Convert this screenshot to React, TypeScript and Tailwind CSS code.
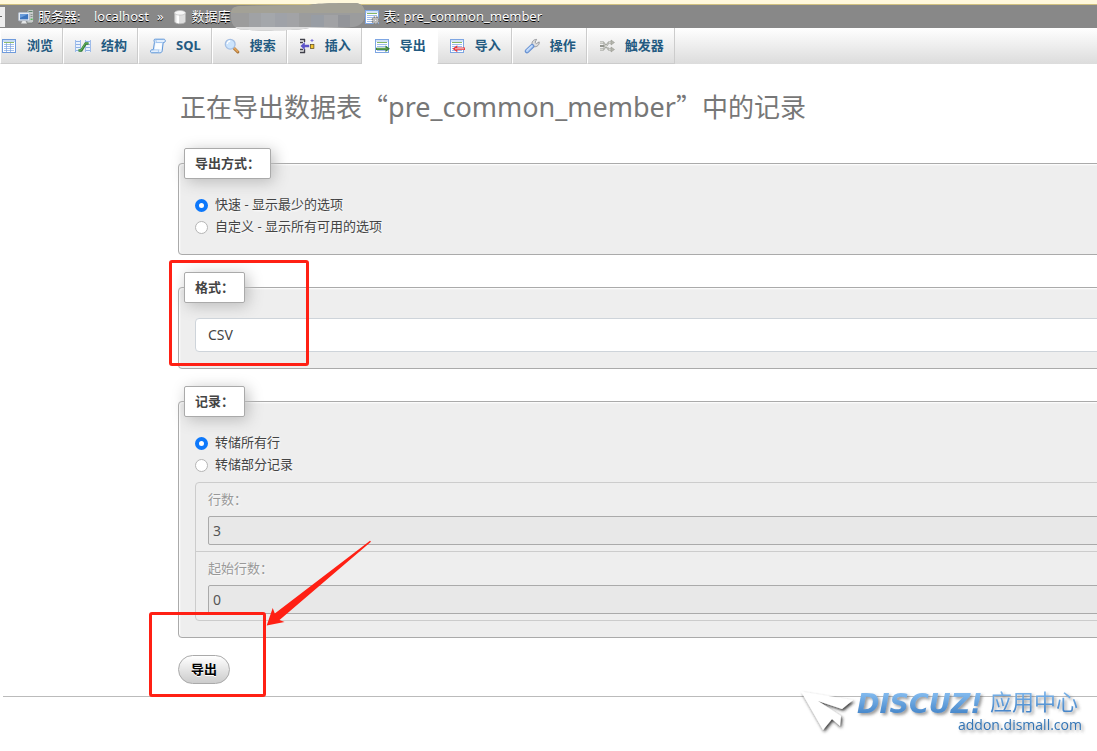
import type { ReactNode } from 'react'

const uiFont = "font-['Noto_Sans','Noto_Sans_CJK_SC',sans-serif]"

function Icon({ children }: { children: ReactNode }) {
  return (
    <svg viewBox="0 0 16 16" className="w-4 h-4 shrink-0" aria-hidden="true">
      {children}
    </svg>
  )
}

function Sheet() {
  return (
    <>
      <rect x="1.5" y="1.5" width="13" height="13" fill="#fff" stroke="#7ea6e3" />
      <rect x="2" y="2" width="12" height="2" fill="#d3e2f8" />
      <path d="M3 4.5h10" stroke="#84b766" />
      <path d="M3 6.5h10M3 8.5h10M3 10.5h10M3 12.5h10" stroke="#9dbcec" />
    </>
  )
}

function BrowseIcon() {
  return (
    <Icon>
      <rect x="1.5" y="1.5" width="13" height="13" fill="#fff" stroke="#6f9bdc" />
      <rect x="2" y="2" width="12" height="2" fill="#c8dbf6" />
      <path d="M3 4.5h10" stroke="#8dbb6c" />
      <path d="M3 6.5h10M3 8.5h10M3 10.5h10M3 12.5h10" stroke="#a5c1ec" />
      <path d="M5.5 5v9M9.5 5v9" stroke="#7da4dd" strokeWidth="0.7" />
    </Icon>
  )
}

function StructureIcon() {
  return (
    <Icon>
      <path d="M0 2h5v12H0zM11 2h5v12h-5z" fill="#eaf2fd" />
      <path d="M.5 2v12M15.5 2v12M5.5 2v12M10.5 2v12" stroke="#9ebcea" />
      <path d="M1 3.5h4M1 6.5h4M1 9.5h4M1 12.5h4M11 3.5h4M11 6.5h4M11 9.5h4M11 12.5h4" stroke="#8fb1e6" />
      <path d="M3.5 12.5h2.8l4.4-7h2.8" fill="none" stroke="#347e39" strokeWidth="2.6" />
      <path d="M3.5 12.2h2.6l4.4-7h3" fill="none" stroke="#65b55b" />
    </Icon>
  )
}

function SqlIcon() {
  return (
    <Icon>
      <path
        d="M4.8 1.2h9c2 0 2 3.3 0 3.3h-.6l-1 8.3c-.2 1.3-1 2-2.2 2H1.8c-1.8 0-1.7-3 .2-3h1.4l1-7.3c.1-.6-1.2-2.9.4-3.3z"
        fill="#e3effd"
        stroke="#5b94d8"
      />
      <path d="M5 1.6c1.4.1 1.6 2.6.8 2.9h7M3.2 11.8h6c-1 .4-1.2 2.6.3 2.8" fill="none" stroke="#a3c6ef" />
      <path d="M5.6 5.2h6.4l-.8 6H4.8z" fill="#fafdff" />
    </Icon>
  )
}

function SearchIcon() {
  return (
    <Icon>
      <path d="M9.8 10l4 4" stroke="#a97438" strokeWidth="3" strokeLinecap="round" />
      <path d="M10 9.9l3.6 3.6" stroke="#e7a75c" strokeWidth="1.5" strokeLinecap="round" />
      <circle cx="6.2" cy="6.2" r="4.9" fill="#cce4fc" stroke="#a5bfe3" strokeWidth="1.3" />
      <path d="M3.2 6a3 3 0 0 1 3-3" fill="none" stroke="#fff" strokeWidth="1.3" />
    </Icon>
  )
}

function InsertIcon() {
  return (
    <Icon>
      <path d="M1 1.5h5M5.5 1v3M1 4.5h3M1 11.5h3M5.5 11v4M1 14.5h5" fill="none" stroke="#40404a" strokeWidth="1.4" />
      <path d="M1.5 8l4.3-4v2.7h4.4v2.6H5.8V12z" fill="#5c54c9" />
      <rect x="11.5" y="6.5" width="3.4" height="4" fill="#f5c52d" stroke="#574619" strokeWidth="0.7" />
      <path d="M13 1v3M11.5 2.5h3" stroke="#7a70da" />
    </Icon>
  )
}

function ExportIcon() {
  return (
    <Icon>
      <Sheet />
      <path d="M2 9.7h9.5V7.6l4.5 3.2-4.5 3.2v-2H2z" fill="#3a8038" />
      <path d="M3 10.8h10.5" stroke="#7dbb6c" strokeWidth="0.8" />
    </Icon>
  )
}

function ImportIcon() {
  return (
    <Icon>
      <Sheet />
      <path d="M16 9.5H8.3V7.3l-4.8 3.5 4.8 3.5v-2.2H16z" fill="#e5353d" />
      <path d="M6 10.8h9.2" stroke="#fbcaca" />
    </Icon>
  )
}

function WrenchIcon() {
  return (
    <Icon>
      <path
        d="M8 6.8c-.5-2.9 1.5-5.5 4.6-5.4L11 4.3l1.4 1.3 2.8-1.7c.4 3-2.2 5.2-5 4.8z"
        fill="#dedede"
        stroke="#8e9196"
        strokeWidth="0.9"
      />
      <path d="M3 13.2l5.2-5" stroke="#668fcf" strokeWidth="4.4" strokeLinecap="round" />
      <path d="M3 13l5-4.8" stroke="#abcbf5" strokeWidth="2.5" strokeLinecap="round" />
      <path d="M3 12.4l4.6-4.3" stroke="#dceaff" strokeLinecap="round" />
    </Icon>
  )
}

function TriggerIcon() {
  return (
    <Icon>
      <path
        d="M1 4.5h3.2l5.6 7H13M1 11.5h3.2l5.6-7H13M1 8h4"
        fill="none"
        stroke="#93958e"
        strokeWidth="2"
      />
      <path d="M1 4.5h3.2l5.6 7H13M1 11.5h3.2l5.6-7H13" fill="none" stroke="#dcded8" strokeWidth="0.9" />
      <path d="M12 2l3.5 2.5L12 7zM12 9l3.5 2.5L12 14z" fill="#b5b7af" stroke="#8d8f87" strokeWidth="0.5" />
    </Icon>
  )
}

function ServerIcon() {
  return (
    <Icon>
      <path d="M9 2l2-1.4h4.6v12L14 14H9z" fill="#c8ccca" stroke="#747a77" strokeWidth="0.7" />
      <path d="M10.5 2.5h4" stroke="#60856d" />
      <path d="M12.5 5.5h2M12.5 7.5h2" stroke="#8a918d" />
      <rect x="12.6" y="9.6" width="2" height="1.4" fill="#54bf58" />
      <rect x="0.6" y="3.6" width="11" height="8.2" rx="0.7" fill="#edf1f7" stroke="#b1bccb" />
      <rect x="2" y="5" width="8.2" height="5.4" fill="#3d75be" />
      <path d="M2 5h8.2L2 9z" fill="#6a9ddb" />
      <path d="M4.5 12h3l1.5 2.6H3z" fill="#e4e6e7" />
    </Icon>
  )
}

function DatabaseIcon() {
  return (
    <Icon>
      <path d="M2.5 4v8.5c0 3 11 3 11 0V4z" fill="#dedede" stroke="#b1b1b1" strokeWidth="0.7" />
      <path d="M4.5 5.5v8.2l2.5.8V6.2z" fill="#fff" />
      <ellipse cx="8" cy="3.8" rx="5.5" ry="2.3" fill="#f6f6f6" stroke="#bfbfbf" strokeWidth="0.7" />
    </Icon>
  )
}

function TableIcon() {
  return (
    <Icon>
      <Sheet />
      <circle cx="11.6" cy="11.4" r="3.4" fill="#c4c4c4" stroke="#858585" strokeWidth="1.6" strokeDasharray="1.7 1" />
      <circle cx="11.6" cy="11.4" r="1.2" fill="#eee" stroke="#909090" strokeWidth="0.6" />
    </Icon>
  )
}

// Covers the database name in the breadcrumb.
function Redaction() {
  return (
    <svg viewBox="0 0 134 28" className="relative z-10 w-[134px] h-7 -mr-px shrink-0" aria-hidden="true">
      <defs>
        <clipPath id="redaction">
          <path d="M0 10C0 4 5 3 12 3L78 2C86 0 118 0 124 0C131 0 134 5 134 11C134 18 130 23 122 24L78 25C70 28 12 28 8 26C2 24 0 20 0 10z" />
        </clipPath>
      </defs>
      <g clipPath="url(#redaction)">
        <path d="M0 0h134v28H0z" fill="#9b9c9d" />
        <path d="M0 0h134v10H0z" fill="#a3a196" />
        <path d="M0 10h18v14H0z" fill="#9c9c9c" />
        <path d="M18 10h12v14H18z" fill="#a0a2a5" />
        <path d="M30 10h14v14H30z" fill="#a4a7ab" />
        <path d="M44 10h12v14H44z" fill="#9fa2a8" />
        <path d="M56 10h12v14H56z" fill="#a2a3a6" />
        <path d="M80 12h13v12H80z" fill="#989da4" />
        <path d="M93 12h14v12H93z" fill="#a1a2a5" />
        <path d="M107 12h12v12h-12z" fill="#93959a" />
        <path d="M0 24h134v4H0z" fill="#dcdcdc" />
      </g>
    </svg>
  )
}

const tabs = [
  { label: '浏览', icon: BrowseIcon },
  { label: '结构', icon: StructureIcon },
  { label: 'SQL', icon: SqlIcon },
  { label: '搜索', icon: SearchIcon },
  { label: '插入', icon: InsertIcon },
  { label: '导出', icon: ExportIcon, active: true },
  { label: '导入', icon: ImportIcon },
  { label: '操作', icon: WrenchIcon },
  { label: '触发器', icon: TriggerIcon },
]

function Breadcrumb() {
  return (
    <div className="flex items-center h-[23px] bg-[#888] text-white text-[13px] [text-shadow:0_1px_0_#000]">
      <button type="button" aria-label="收起" className="flex items-center w-[5px] h-5 mr-[13px] bg-[#eee]">
        <span className="w-0.5 h-px bg-[#666]" />
      </button>
      <ServerIcon />
      <a href="#server" className="ml-1 flex">
        <span className="w-[56px]">服务器:</span>
        <span>localhost</span>
      </a>
      <span className="mx-2">»</span>
      <DatabaseIcon />
      <a href="#database" className="ml-1 whitespace-nowrap">数据库</a>
      <Redaction />
      <TableIcon />
      <a href="#table" className="ml-1 whitespace-nowrap">表: pre_common_member</a>
    </div>
  )
}

function Tabs() {
  return (
    <nav className="flex h-9 bg-linear-to-b from-white to-[#dcdcdc]">
      {tabs.map(({ label, icon: TabIcon, active }) => (
        <a
          key={label}
          href="#tab"
          className={`flex items-center gap-2.5 pl-[11px] first:pl-0 pr-2.5 first:pr-[9px] border-l border-r border-b border-l-white text-[13px] font-bold text-[#235a81] whitespace-nowrap ${
            active ? 'bg-white border-r-white border-b-white' : 'border-r-[#ccc] border-b-[#ccc]'
          }`}
        >
          <TabIcon />
          {label}
        </a>
      ))}
    </nav>
  )
}

function Section({ title, children }: { title: string; children: ReactNode }) {
  return (
    <fieldset className="mb-[17px] px-[5px] pb-4 rounded border border-[#aaa] bg-[#eee] shadow-[inset_1px_1px_2px_#fff] [text-shadow:1px_1px_2px_#fff]">
      <legend className="px-2.5 h-[31px] leading-[29px] rounded-xs border border-[#aaa] bg-white font-bold shadow-[3px_3px_15px_#bbb]">
        {title}
      </legend>
      <div className="px-[11px] pt-[15px]">{children}</div>
    </fieldset>
  )
}

function Radio({ name, label, checked }: { name: string; label: string; checked?: boolean }) {
  return (
    <label className="flex items-center h-[22px] gap-[7px]">
      <input
        type="radio"
        name={name}
        defaultChecked={checked}
        className="appearance-none w-[13px] h-[13px] rounded-full border border-[#b5b5b5] bg-white checked:border-4 checked:border-[#0d78fb]"
      />
      {label}
    </label>
  )
}

function NumberRow({ id, label, value }: { id: string; label: string; value: string }) {
  return (
    <li className="px-3 pt-[5px] pb-1.5 border-b border-[#ccc] last:border-b-0">
      <label htmlFor={id} className="block h-[22px] leading-[22px] mb-1.5 text-[#999]">
        {label}
      </label>
      <input
        id={id}
        disabled
        defaultValue={value}
        className="block w-full h-[29px] px-1 rounded-xs border border-[#aaa] bg-[#e8e8e8] text-sm text-[#555]"
      />
    </li>
  )
}

function Watermark() {
  return (
    <svg viewBox="0 0 297 60" className="absolute left-[800px] top-[685px] w-[297px] h-[60px]" role="img" aria-label="DISCUZ! 应用中心">
      <defs>
        <linearGradient id="brand" x1="0" y1="0" x2="0" y2="1">
          <stop offset="0.2" stopColor="#80b8ed" />
          <stop offset="0.85" stopColor="#4686c9" />
        </linearGradient>
        <filter id="drop" x="-10%" y="-20%" width="125%" height="150%">
          <feDropShadow dx="2" dy="2" stdDeviation="1.6" floodColor="#555" floodOpacity="0.6" />
        </filter>
        <filter id="plane-drop" x="-10%" y="-20%" width="130%" height="150%">
          <feDropShadow dx="1.5" dy="2" stdDeviation="1.6" floodColor="#222" floodOpacity="0.85" />
        </filter>
      </defs>
      <path
        d="M1 6.5L53 15L42 24L18 16L41 31L40 41L32 34L23 45z"
        fill="#fff"
        filter="url(#plane-drop)"
      />
      <g filter="url(#drop)">
        <text
          x="57"
          y="28"
          fill="url(#brand)"
          className="font-['DejaVu_Sans',sans-serif] text-[27px] font-bold italic"
        >
          DISCUZ!
        </text>
        <text x="190" y="25" fill="url(#brand)" className="font-['Noto_Sans_CJK_SC',sans-serif] text-[22px]">
          应用中心
        </text>
        <text x="158" y="45" fill="#3275b5" className="font-['Open_Sans',sans-serif] text-[14px]">
          addon.dismall.com
        </text>
      </g>
    </svg>
  )
}

export default function App() {
  return (
    <div className={`relative min-h-screen overflow-hidden bg-white text-[13px] text-[#444] ${uiFont}`}>
      <div className="h-[5px] bg-[#fff8dc] border-b border-[#d0c080]" />
      <Breadcrumb />
      <Tabs />

      <main className="ml-[178px] -mr-10">
        <h1 className="ml-0.5 pt-[22px] mb-[21px] text-[26px] leading-10 text-[#777] whitespace-nowrap">
          正在导出数据表<span className="font-['Noto_Sans_CJK_SC',sans-serif]">“</span>
          <span className="text-[27px]">pre_common_member</span>
          <span className="font-['Noto_Sans_CJK_SC',sans-serif]">”</span>中的记录
        </h1>

        <Section title="导出方式：">
          <Radio name="method" label="快速 - 显示最少的选项" checked />
          <Radio name="method" label="自定义 - 显示所有可用的选项" />
        </Section>

        <Section title="格式：">
          <select
            aria-label="格式"
            className="appearance-none block w-full h-[34px] px-3 rounded border border-[#ced4da] bg-white text-sm text-[#444]"
          >
            <option>CSV</option>
          </select>
        </Section>

        <Section title="记录：">
          <Radio name="rows" label="转储所有行" checked />
          <Radio name="rows" label="转储部分记录" />
          <ul className="mt-1.5 rounded border border-[#ccc]">
            <NumberRow id="limit" label="行数：" value="3" />
            <NumberRow id="offset" label="起始行数：" value="0" />
          </ul>
        </Section>

        <button
          type="button"
          className="block h-[29px] px-3 rounded-full border border-[#aaa] bg-linear-to-b from-white to-[#ccc] font-bold text-black [text-shadow:0_1px_0_#fff] cursor-pointer"
        >
          导出
        </button>
      </main>
      <hr className="ml-[3px] mt-3 border-[#bbb]" />

      <div className="absolute left-[169px] top-[260px] w-[140px] h-[106px] border-3 border-[#ff2014] rounded-[3px]" />
      <div className="absolute left-[149px] top-[612px] w-[117px] h-[85px] border-3 border-[#ff2014] rounded-[3px]" />
      <svg viewBox="0 0 106 86" className="absolute left-[266px] top-[540px] w-[106px] h-[86px]" aria-hidden="true">
        <path d="M.7 85.5L6.7 68L8.8 73.5L104 .7L105 1.8L13.5 80L18.5 82z" fill="#ff2014" />
      </svg>
      <Watermark />
    </div>
  )
}
